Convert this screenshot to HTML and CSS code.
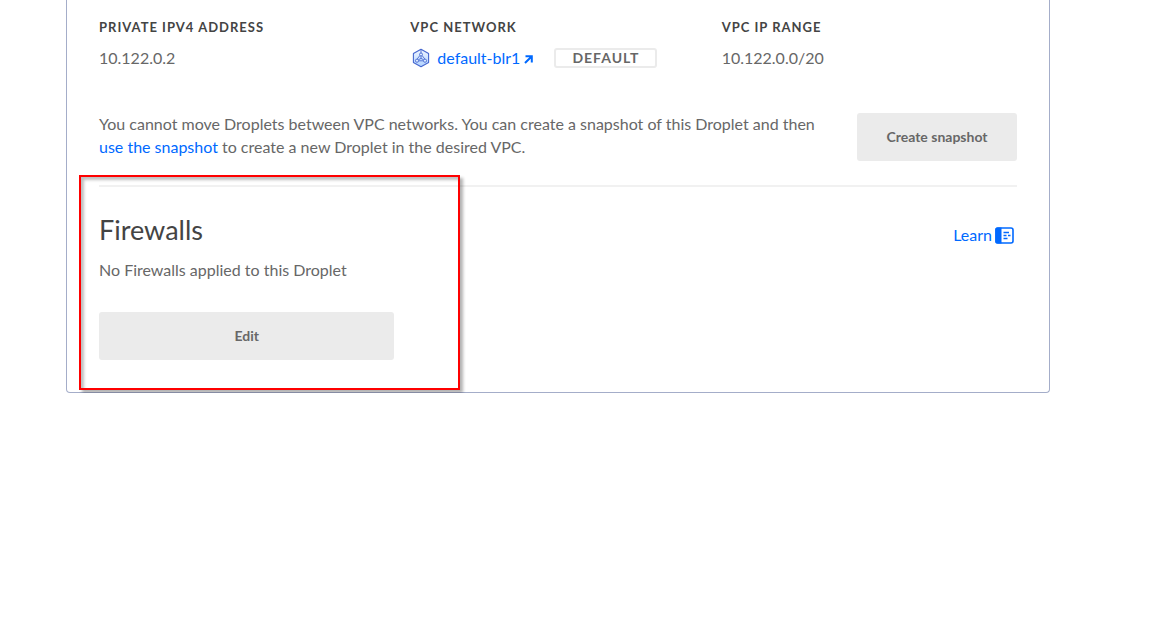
FILE: index.html
```html
<!DOCTYPE html>
<html lang="en">
<head>
<meta charset="utf-8">
<title>Droplet networking</title>
<link rel="stylesheet" href="styles.css">
</head>
<body>
<main class="card">
  <dl class="details">
    <div>
      <dt class="label">Private IPv4 address</dt>
      <dd class="value">10.122.0.2</dd>
    </div>
    <div>
      <dt class="label">VPC network</dt>
      <dd class="value network">
        <svg class="vpc-icon" viewBox="0 0 18 20" aria-hidden="true">
          <defs><linearGradient id="vpc" x1="0" y1="0" x2="0" y2="1"><stop offset="0" stop-color="#f1f6ff"/><stop offset="1" stop-color="#b0d2ff"/></linearGradient></defs>
          <path d="M9 1.200 16.600 5.500v9L9 18.800 1.400 14.500V5.500Z" fill="url(#vpc)" stroke="#4667cf" stroke-width="1.100" stroke-linejoin="round"/>
          <g fill="none" stroke="#4a6bd0" stroke-width=".9">
            <path d="M9 2v3M9 8v2.500M7.900 7.500 5.200 11M10.100 7.500l2.700 3.500M6.600 12.800h4.800M6.300 11.800 9 10.400l2.700 1.400"/>
            <g fill="#dceaff"><circle cx="9" cy="6.500" r="1.500"/><circle cx="5" cy="12.700" r="1.600"/><circle cx="13" cy="12.700" r="1.600"/></g>
          </g>
        </svg>
        <a class="link" href="#network">default-blr1</a>
        <svg class="arrow-icon" viewBox="0 0 9 9" aria-hidden="true"><path d="M1.500 1.200H7.800V7.500M7.300 1.700 1 8" fill="none" stroke="#0069ff" stroke-width="2"/></svg>
        <span class="badge">Default</span>
      </dd>
    </div>
    <div>
      <dt class="label">VPC IP range</dt>
      <dd class="value">10.122.0.0/20</dd>
    </div>
  </dl>
  <section class="notice">
    <p class="notice-text">You cannot move Droplets between VPC networks. You can create a snapshot of this Droplet and then <a class="link" href="#snapshot">use the snapshot</a> to create a new Droplet in the desired VPC.</p>
    <button class="button" type="button">Create snapshot</button>
  </section>
  <section class="firewalls">
    <div class="firewall-info">
      <h2 class="title">Firewalls</h2>
      <p class="status">No Firewalls applied to this Droplet</p>
      <button class="button edit" type="button">Edit</button>
      <div class="highlight"></div>
    </div>
    <a class="link learn" href="#learn">Learn
      <svg class="learn-icon" viewBox="0 0 19 17" aria-hidden="true">
        <rect x="1" y="1" width="17" height="15" rx="2" fill="#fff" stroke="#0069ff" stroke-width="1.600"/>
        <path d="M2 .5h4.500v16H2A1.700 1.700 0 0 1 .3 15V2A1.700 1.700 0 0 1 2 .5Z" fill="#0069ff"/>
        <path d="M8.500 5.500H14M8.500 8.500h3M13 8.500h2.500M8.500 11.500h4" fill="none" stroke="#0069ff" stroke-width="1.300"/>
      </svg>
    </a>
  </section>
</main>
</body>
</html>
```
FILE: styles.css
```css
* { box-sizing: border-box; }

body {
  margin: 0;
  background: #fff;
  color: #676767;
  font: 16px/24px Lato, "Open Sans", sans-serif;
}

p, dl, dd, h2 { margin: 0; }

.card {
  margin: 0 113px 0 66px;
  padding: 19px 32px 32px;
  border: 1px solid #a4adc9;
  border-top: 0;
  border-radius: 0 0 4px 4px;
}

.details {
  display: grid;
  grid-template-columns: repeat(3, 1fr);
  gap: 16px;
}

.label {
  margin-bottom: 11px;
  color: #444;
  font-size: 13px;
  font-weight: 700;
  line-height: 16px;
  letter-spacing: 1px;
  text-transform: uppercase;
}

.network {
  display: flex;
  align-items: center;
}

.vpc-icon {
  width: 18px;
  height: 20px;
  margin: 0 7px 0 2px;
}

.arrow-icon {
  width: 9px;
  height: 9px;
  margin: 2px 21px 0 4px;
}

.badge {
  padding: 0 16px;
  border: 2px solid #ebebeb;
  border-radius: 3px;
  font-size: 14px;
  font-weight: 700;
  line-height: 16px;
  letter-spacing: 1px;
  text-transform: uppercase;
}

.link {
  color: #0069ff;
  text-decoration: none;
}

.notice {
  display: flex;
  align-items: flex-end;
  gap: 32px;
  margin-top: 42px;
  padding-bottom: 24px;
  border-bottom: 2px solid #f1f1f1;
}

.notice-text {
  flex: 1;
  padding-bottom: 3px;
  line-height: 23px;
}

.button {
  height: 48px;
  width: 160px;
  padding: 0;
  border: 0;
  border-radius: 3px;
  background: #ebebeb;
  color: #676767;
  font: 700 14px/20px Lato, "Open Sans", sans-serif;
}

.firewalls {
  display: grid;
  grid-template-columns: repeat(3, 1fr);
  gap: 16px;
  padding-top: 27px;
}

.firewall-info { position: relative; }

.title {
  margin-bottom: 12px;
  color: #444;
  font-size: 27px;
  font-weight: 400;
  line-height: 32px;
}

.edit {
  display: block;
  width: 100%;
  margin-top: 30px;
}

.highlight {
  position: absolute;
  inset: -39px -66px -30px -20px;
  border: 2px solid #f00;
  box-shadow: 3px 3px 3px rgba(0, 0, 0, .3), inset 3px 3px 3px rgba(0, 0, 0, .25);
  pointer-events: none;
}

.learn {
  grid-column: 3;
  justify-self: end;
  align-self: start;
  display: flex;
  align-items: center;
  gap: 3px;
  margin: 9px 3px 0 0;
}

.learn-icon {
  width: 19px;
  height: 17px;
}
```
